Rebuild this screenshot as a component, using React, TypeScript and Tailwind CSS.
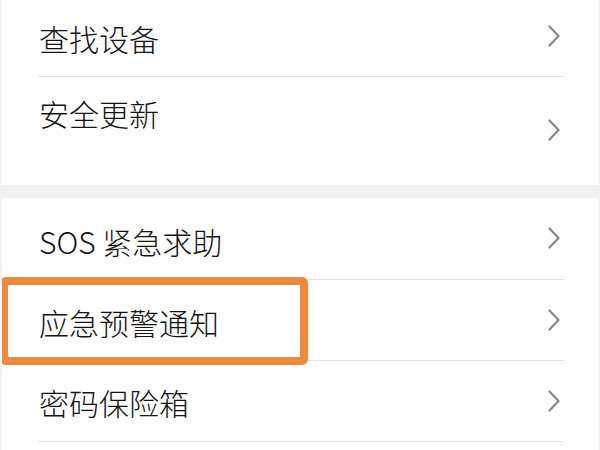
import React from "react";

function Chevron() {
  return (
    <svg width="14" height="22" viewBox="0 0 14 22" className="shrink-0">
      <path d="M2.5 1.5 L11.5 11 L2.5 20.5" fill="none" stroke="#888888" strokeWidth="2.2" strokeLinecap="round" strokeLinejoin="round" />
    </svg>
  );
}

function Row({ label, h, divider = true, children, textClass = "", chevClass = "" }: { label: string; h: string; divider?: boolean; children?: React.ReactNode; textClass?: string; chevClass?: string }) {
  return (
    <div className="relative">
      <div className={`flex items-center justify-between pl-[37px] pr-[37px] ${h}`}>
        <span className={`text-[30px] leading-none font-light text-[#141414] ${textClass}`}>{label}</span>
        <span className={chevClass}><Chevron /></span>
      </div>
      {divider && <div className="ml-[36px] mr-[34px] h-px bg-[#e2e2e2]" />}
      {children}
    </div>
  );
}

export default function App() {
  return (
    <div
      className="w-[600px] h-[450px] overflow-hidden bg-[#fdfdfd] border-l-2 border-r-2 border-[#f3f3f3]"
      style={{ fontFamily: '"Noto Sans CJK SC", "Noto Sans", sans-serif' }}
    >
      <Row label="查找设备" h="h-[76px]" chevClass="-mt-[4px]" />
      <div className="relative h-[108px] pl-[37px] pr-[37px] flex justify-between">
        <span className="text-[30px] leading-none font-light text-[#141414] mt-[21px]">安全更新</span>
        <span className="mt-[42px]"><Chevron /></span>
      </div>
      <div className="h-[13px] bg-[#f2f2f2]" />
      <Row label="SOS 紧急求助" h="h-[81px]" textClass="mt-[4px]" chevClass="-mt-[2px]" />
      <Row label="应急预警通知" h="h-[80px]" textClass="mt-[3px]">
        <div className="absolute left-[-2px] top-[-3px] w-[308px] h-[88px] border-[8px] border-[#ef8a3d] rounded-[6px]" />
      </Row>
      <Row label="密码保险箱" h="h-[80px]" textClass="mt-[2px]" />
    </div>
  );
}
